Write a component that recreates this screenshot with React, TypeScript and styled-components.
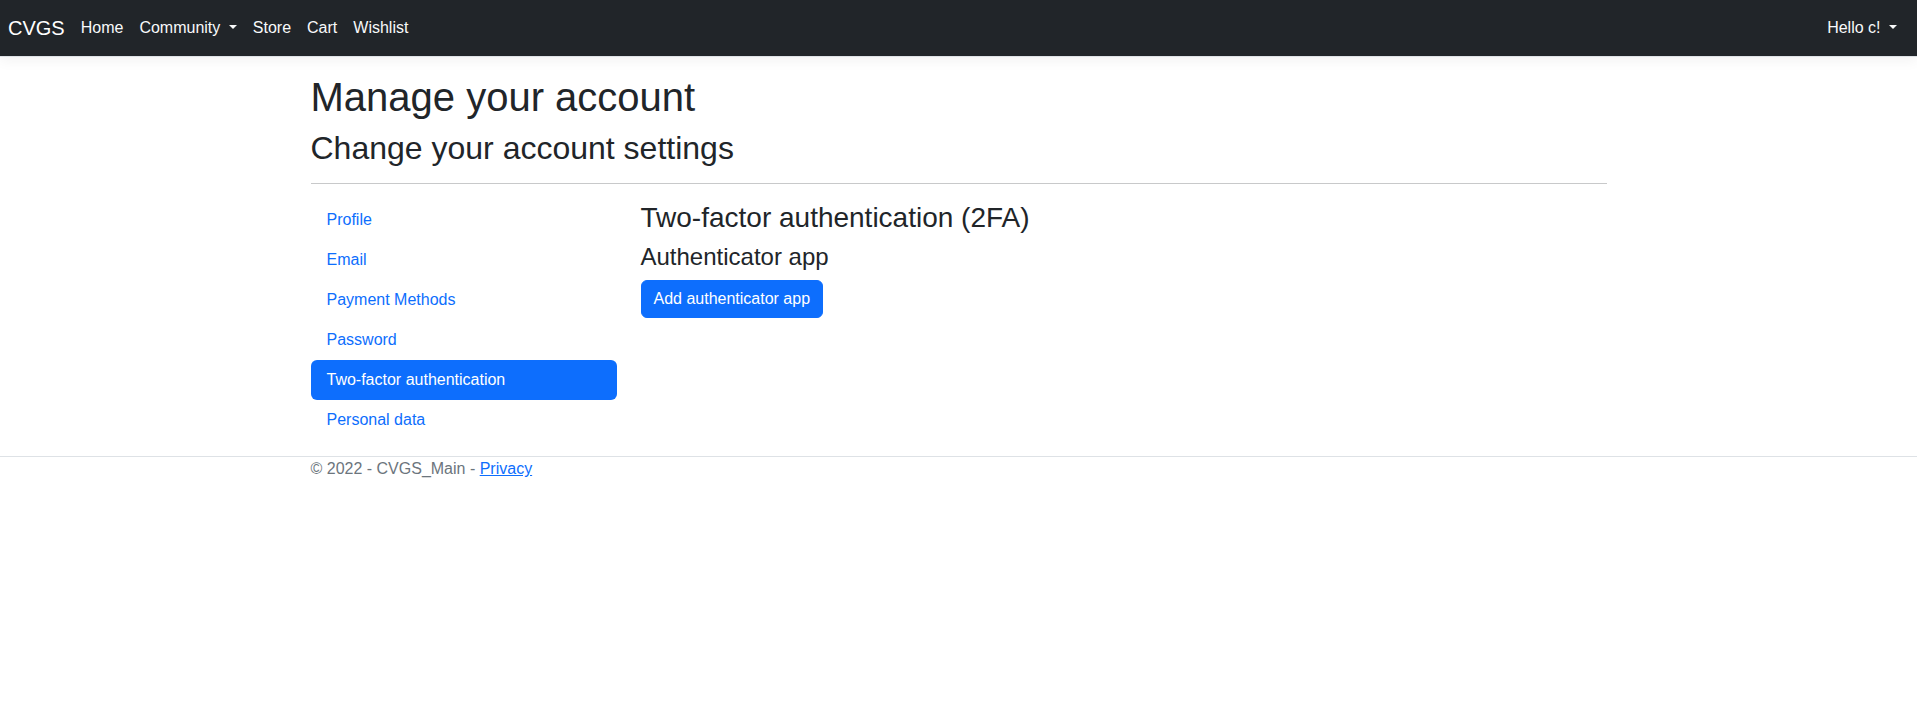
import React from "react";
import styled, { createGlobalStyle } from "styled-components";

const GlobalStyle = createGlobalStyle`
  *, *::before, *::after { box-sizing: border-box; }
  html, body { margin: 0; padding: 0; }
  body {
    font-family: "Liberation Sans", Arial, sans-serif;
    font-size: 16px;
    line-height: 1.5;
    color: #212529;
    background: #fff;
  }
`;

const NavBar = styled.nav`
  background: #212529;
  border-bottom: 1px solid #dee2e6;
  box-shadow: 0 4px 12px rgba(0, 0, 0, 0.05);
  margin-bottom: 16px;
  padding: 8px 0;
`;

const NavInner = styled.div`
  display: flex;
  align-items: center;
  justify-content: space-between;
  padding: 0 12px 0 8px;
`;

const LeftGroup = styled.div`
  display: flex;
  align-items: center;
`;

const Brand = styled.a`
  font-size: 20px;
  line-height: 30px;
  padding: 5px 0;
  margin-right: 8px;
  color: #fff;
  text-decoration: none;
`;

const NavList = styled.ul`
  display: flex;
  list-style: none;
  margin: 0;
  padding: 0;
`;

const NavLink = styled.a<{ $caret?: boolean }>`
  display: block;
  padding: 8px;
  color: #f8f9fa;
  text-decoration: none;
  line-height: 24px;
  white-space: pre;
  ${(p) =>
    p.$caret
      ? `&::after {
    content: "";
    display: inline-block;
    margin-left: 0.255em;
    vertical-align: 0.255em;
    border-top: 0.3em solid;
    border-right: 0.3em solid transparent;
    border-left: 0.3em solid transparent;
    border-bottom: 0;
  }`
      : ""}
`;

const Container = styled.div`
  width: 1320px;
  margin: 0 auto;
  padding: 0 12px;
`;

const Main = styled.main`
  padding-bottom: 16px;
`;

const H1 = styled.h1`
  font-size: 40px;
  font-weight: 500;
  line-height: 1.2;
  margin: 0 0 8px;
`;

const H2 = styled.h2`
  font-size: 32px;
  font-weight: 500;
  line-height: 1.2;
  margin: 0 0 8px;
`;

const H3 = styled.h3`
  font-size: 28px;
  font-weight: 500;
  line-height: 1.2;
  margin: 1px 0 8px;
`;

const H4 = styled.h4`
  font-size: 24px;
  font-weight: 500;
  line-height: 1.2;
  margin: 0 0 8px;
`;

const Rule = styled.hr`
  margin: 16px 0;
  border: 0;
  border-top: 1px solid #c8c9ca;
`;

const Row = styled.div`
  display: grid;
  grid-template-columns: 306px 1fr;
  column-gap: 24px;
`;

const Pills = styled.ul`
  list-style: none;
  margin: 0;
  padding: 0;
  display: flex;
  flex-direction: column;
`;

const Pill = styled.a<{ $active?: boolean }>`
  display: block;
  padding: 8px 16px;
  line-height: 24px;
  border-radius: 6px;
  text-decoration: none;
  color: ${(p) => (p.$active ? "#fff" : "#0d6efd")};
  background: ${(p) => (p.$active ? "#0d6efd" : "transparent")};
`;

const PrimaryButton = styled.button`
  font-family: inherit;
  font-size: 16px;
  line-height: 24px;
  padding: 6px 12px;
  border: 1px solid #0d6efd;
  border-radius: 6px;
  background: #0d6efd;
  color: #fff;
  cursor: pointer;
`;

const Footer = styled.footer`
  border-top: 1px solid #dee2e6;
  color: #6c757d;
  line-height: 24px;
  white-space: nowrap;
`;

const FooterLink = styled.a`
  color: #0d6efd;
  text-decoration: underline;
`;

const navItems = [
  { label: "Home" },
  { label: "Community", caret: true },
  { label: "Store" },
  { label: "Cart" },
  { label: "Wishlist" },
];

const sideItems = [
  "Profile",
  "Email",
  "Payment Methods",
  "Password",
  "Two-factor authentication",
  "Personal data",
];

export default function App() {
  return (
    <>
      <GlobalStyle />
      <NavBar>
        <NavInner>
          <LeftGroup>
            <Brand href="#">CVGS</Brand>
            <NavList>
              {navItems.map((n) => (
                <li key={n.label}>
                  <NavLink href="#" $caret={n.caret}>
                    {n.caret ? `${n.label} ` : n.label}
                  </NavLink>
                </li>
              ))}
            </NavList>
          </LeftGroup>
          <NavList>
            <li>
              <NavLink href="#" $caret>
                {"Hello c! "}
              </NavLink>
            </li>
          </NavList>
        </NavInner>
      </NavBar>
      <Container>
        <Main>
          <H1>Manage your account</H1>
          <div>
            <H2>Change your account settings</H2>
            <Rule />
            <Row>
              <Pills>
                {sideItems.map((s) => (
                  <li key={s}>
                    <Pill href="#" $active={s === "Two-factor authentication"}>
                      {s}
                    </Pill>
                  </li>
                ))}
              </Pills>
              <div>
                <H3>Two-factor authentication (2FA)</H3>
                <H4>Authenticator app</H4>
                <PrimaryButton>Add authenticator app</PrimaryButton>
              </div>
            </Row>
          </div>
        </Main>
      </Container>
      <Footer>
        <Container>
          © 2022 - CVGS_Main - <FooterLink href="#">Privacy</FooterLink>
        </Container>
      </Footer>
    </>
  );
}
